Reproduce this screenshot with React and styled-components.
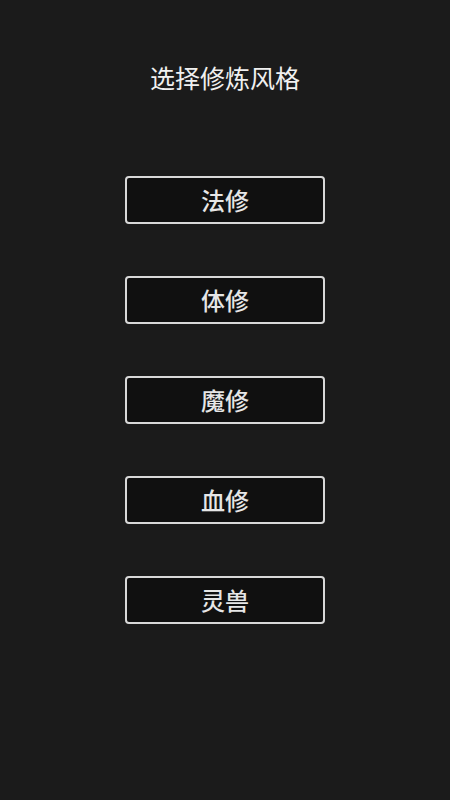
import React from "react";
import styled, { createGlobalStyle } from "styled-components";

const Global = createGlobalStyle`
  html, body { margin: 0; padding: 0; background: #1b1b1b; }
  body { font-family: "Noto Sans CJK SC", "Noto Sans", sans-serif; }
`;

const Page = styled.div`
  width: 450px;
  height: 800px;
  background: #1b1b1b;
  display: flex;
  flex-direction: column;
  align-items: center;
  box-sizing: border-box;
  padding-top: 60px;
`;

const Title = styled.h1`
  margin: 0;
  font-size: 25px;
  font-weight: 400;
  line-height: 34px;
  color: #f0f0f0;
`;

const List = styled.div`
  margin-top: 82px;
  display: flex;
  flex-direction: column;
  gap: 52px;
`;

const Choice = styled.button`
  width: 200px;
  height: 48px;
  box-sizing: border-box;
  border: 2px solid #d8d8d8;
  border-radius: 4px;
  background: #101010;
  color: #e6e6e6;
  font-family: "Noto Sans CJK SC", "Noto Sans", sans-serif;
  font-size: 24px;
  font-weight: 500;
  line-height: 1;
  padding: 0;
  display: flex;
  align-items: center;
  justify-content: center;
  cursor: pointer;
`;

const styles = ["法修", "体修", "魔修", "血修", "灵兽"];

export default function App() {
  return (
    <>
      <Global />
      <Page>
        <Title>选择修炼风格</Title>
        <List>
          {styles.map((s) => (
            <Choice key={s}>{s}</Choice>
          ))}
        </List>
      </Page>
    </>
  );
}
